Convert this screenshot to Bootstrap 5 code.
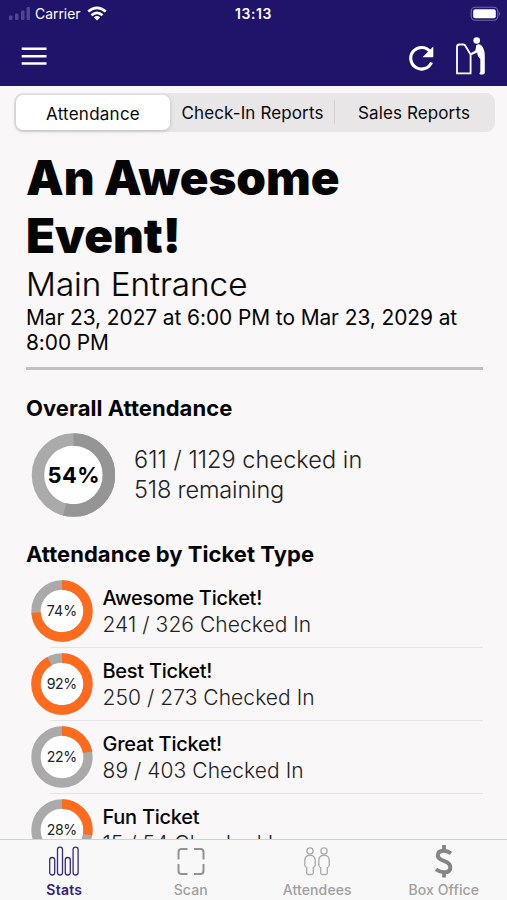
<!DOCTYPE html>
<html lang="en">
<head>
<meta charset="utf-8">
<meta name="viewport" content="width=device-width, initial-scale=1">
<title>Event Stats</title>
<link href="https://cdn.jsdelivr.net/npm/bootstrap@5.3.0/dist/css/bootstrap.min.css" rel="stylesheet">
<style>
body{font-family:Inter,"Liberation Sans",sans-serif;background:#f9f7f8;color:#050505}
svg{display:block;flex:none}
.app{height:900px;max-width:507px}
.top{background:#1f136a;color:#fff;height:86px;flex:none}
.status{height:28px;padding:0 5px 0 9px;font-size:13.9px;line-height:28px}
.status>*{flex:1 1 0}
.clock{font-weight:600;letter-spacing:.65px;margin-left:-4px}
.tools{height:58px;padding:0 20px 0 21px}
.door{margin-left:20px;margin-top:-2px}
.segment{height:39px;margin:7px 12px 0 14px;background:#e8e6e7;border-radius:9px;flex:none;font-size:17px;font-weight:500}
.segment button{border:0;background:none;padding:2px 0 0;color:#080808;white-space:nowrap;height:38px;line-height:35px;letter-spacing:.12px}
.segment .chosen{width:154px;height:35px;line-height:32px;background:#fff;border-radius:7px;box-shadow:0 1px 4px #0003;margin:2px 0 0 2px;letter-spacing:.25px}
.seg-mid{width:165px}
.segment .seg-end{flex:1;position:relative;padding-right:2px}
.seg-end::before{content:"";position:absolute;left:-1px;top:7px;height:24px;border-left:1px solid #d2d0d2}
.content{padding:17px 24px 0 26px;min-height:0;overflow:hidden}
.title{font-size:47.500px;line-height:57.5px;font-weight:900;margin:0;width:350px;letter-spacing:-.03px}
.place{font-size:33.2px;line-height:41px;font-weight:300;white-space:nowrap;-webkit-text-stroke:.2px #050505}
.dates{font-size:20.900px;line-height:25px;white-space:nowrap;letter-spacing:-.07px}
.rule{height:2.500px;background:#c2c0c2;margin-top:12px}
.heading{font-size:22px;line-height:28px;font-weight:700;margin:24px 0 0;white-space:nowrap;letter-spacing:.04px}
.overall{height:84px;padding-left:5px;gap:19px;margin-top:11px}
.by-type{margin-top:23px}
.count{font-size:23.500px;line-height:30.5px;font-weight:300;white-space:nowrap;color:#222;letter-spacing:.06px;padding-top:1px}
.remain{letter-spacing:-.15px}
.tickets{padding-left:5px;margin-top:8px}
.ticket{height:73.3px;gap:9.500px;position:relative}
.ticket svg{margin-top:4px}
.ticket-text{padding-top:9px}
.ticket::after{content:"";position:absolute;left:19px;right:0;bottom:1px;height:1.300px;background:#e5e3e5}
.ticket-name{font-size:20px;line-height:26px;font-weight:500;white-space:nowrap;letter-spacing:-.27px}
.ticket-count{font-size:21px;line-height:27px;font-weight:300;white-space:nowrap;color:#222;letter-spacing:.05px}
.tabs{height:61px;padding-left:1px;background:#f8f8f8;border-top:1px solid #d3d1d3;flex:none;font-size:14px;font-weight:500;color:#a0a0a0}
.tabs a{flex:1;text-decoration:none;color:inherit;padding-top:3px;line-height:18px;letter-spacing:.12px}
.tabs svg{margin-bottom:2px}
.tabs a.current{color:#30207c;font-weight:600;letter-spacing:.25px}
</style>
<script src="https://cdn.jsdelivr.net/npm/bootstrap@5.3.0/dist/js/bootstrap.bundle.min.js"></script>
</head>
<body>
<div class="app d-flex flex-column overflow-hidden">
<header class="top">
<div class="status d-flex align-items-center">
<div class="d-flex align-items-center">
<svg width="22" height="14" fill="#51468b"><rect y="8.5" width="3.5" height="4.5" rx="1"/><rect x="6" y="6.5" width="3.5" height="6.5" rx="1"/><rect x="12" y="3.5" width="3.5" height="9.5" rx="1"/><rect x="17.5" y="0" width="3.5" height="13" rx="1"/></svg>
<span class="ms-1">Carrier</span>
<svg width="22" height="16" viewBox="0 0 22 16" fill="none" stroke="#fff" stroke-width="2.7" style="margin-left:5px"><path d="M2.3 5.6Q11-2 19.7 5.6M5.5 9.200Q11 4.5 16.5 9.200"/><path d="M11 14.500 7.8 11.3Q11 8.6 14.2 11.3Z" fill="#fff" stroke="none"/></svg>
</div>
<div class="clock text-center">13:13</div>
<div class="d-flex justify-content-end"><svg width="32" height="16" viewBox="0 0 32 16"><rect x="1.200" y="1.200" width="26.6" height="13" rx="4" fill="none" stroke="#7169a4" stroke-width="1.1"/><rect x="3.2" y="3.200" width="22.6" height="9" rx="2" fill="#fff"/><path d="M29.2 5.5q2 2.3 0 4.6Z" fill="#7169a4"/></svg></div>
</div>
<div class="tools d-flex align-items-center">
<svg width="26" height="20" viewBox="0 0 26 20" stroke="#fff" stroke-width="2.5"><path d="M.7 1.7h24.8M.7 9.200h24.8M.7 16.500h24.8"/></svg>
<svg class="ms-auto" width="28" height="28" viewBox="0 0 28 28"><path d="M23.3 8.900A10.8 10.8 0 1 0 24.5 19.500" fill="none" stroke="#fff" stroke-width="3.1"/><path d="M26.3 3.5V14.300H15.5Z" fill="#fff"/></svg>
<svg class="door" width="32" height="40" viewBox="0 0 32 40"><path d="M2 37.4V11q0-2.5 2.5-2.5h3.8q1.4 0 2 1.2l5.3 8.8v18.9Z" fill="none" stroke="#fff" stroke-width="1.8" stroke-linejoin="round"/><circle cx="21.7" cy="4.500" r="3.3" fill="#fff"/><path d="M21.3 8.9Q25 7.3 27 9.900 30.2 14 29.8 22V36.500q0 2-2 2h-2.2q-1.3 0-1.1-1.5l.8-1V23Q22 20 22.3 16.600L16.2 19.200 15.6 17.300 20.4 14.500Z" fill="#fff"/></svg>
</div>
</header>
<div class="segment d-flex">
<button class="chosen">Attendance</button><button class="seg-mid">Check-In Reports</button><button class="seg-end">Sales Reports</button>
</div>
<main class="content flex-grow-1">
<h1 class="title">An Awesome Event!</h1>
<div class="place">Main Entrance</div>
<div class="dates">Mar 23, 2027 at 6:00 PM to Mar 23, 2029 at<br>8:00 PM</div>
<div class="rule"></div>
<h2 class="heading">Overall Attendance</h2>
<div class="overall d-flex align-items-center">
<svg width="84" height="84" viewBox="0 0 84 84"><circle cx="42.5" cy="42" r="35.5" fill="#fff" stroke="#aaa" stroke-width="12.5"/><circle cx="42.5" cy="42" r="35.5" fill="none" stroke="#959595" stroke-width="12.5" pathLength="100" stroke-dasharray="54 46" transform="rotate(-90 42.5 42)"/><text x="42.5" y="50" text-anchor="middle" font-size="22" font-weight="700" textLength="52">54%</text></svg>
<div class="count"><div>611 / 1129 checked in</div><div class="remain">518 remaining</div></div>
</div>
<h2 class="heading by-type">Attendance by Ticket Type</h2>
<div class="tickets">
<div class="ticket d-flex"><svg width="62" height="62" viewBox="0 0 62 62"><circle cx="31" cy="31" r="26" fill="#fff" stroke="#aaa" stroke-width="9.3"/><circle cx="31" cy="31" r="26" fill="none" stroke="#ff6b1c" stroke-width="9.3" pathLength="100" stroke-dasharray="74 26" transform="rotate(-90 31 31)"/><text x="31" y="36" text-anchor="middle" font-size="14.2" fill="#222" textLength="30.5">74%</text></svg><div class="ticket-text"><div class="ticket-name">Awesome Ticket!</div><div class="ticket-count">241 / 326 Checked In</div></div></div>
<div class="ticket d-flex"><svg width="62" height="62" viewBox="0 0 62 62"><circle cx="31" cy="31" r="26" fill="#fff" stroke="#aaa" stroke-width="9.3"/><circle cx="31" cy="31" r="26" fill="none" stroke="#ff6b1c" stroke-width="9.3" pathLength="100" stroke-dasharray="92 8" transform="rotate(-90 31 31)"/><text x="31" y="36" text-anchor="middle" font-size="14.2" fill="#222" textLength="30.5">92%</text></svg><div class="ticket-text"><div class="ticket-name">Best Ticket!</div><div class="ticket-count">250 / 273 Checked In</div></div></div>
<div class="ticket d-flex"><svg width="62" height="62" viewBox="0 0 62 62"><circle cx="31" cy="31" r="26" fill="#fff" stroke="#aaa" stroke-width="9.3"/><circle cx="31" cy="31" r="26" fill="none" stroke="#ff6b1c" stroke-width="9.3" pathLength="100" stroke-dasharray="22 78" transform="rotate(-90 31 31)"/><text x="31" y="36" text-anchor="middle" font-size="14.2" fill="#222" textLength="30.5">22%</text></svg><div class="ticket-text"><div class="ticket-name">Great Ticket!</div><div class="ticket-count">89 / 403 Checked In</div></div></div>
<div class="ticket d-flex"><svg width="62" height="62" viewBox="0 0 62 62"><circle cx="31" cy="31" r="26" fill="#fff" stroke="#aaa" stroke-width="9.3"/><circle cx="31" cy="31" r="26" fill="none" stroke="#ff6b1c" stroke-width="9.3" pathLength="100" stroke-dasharray="28 72" transform="rotate(-90 31 31)"/><text x="31" y="36" text-anchor="middle" font-size="14.2" fill="#222" textLength="30.5">28%</text></svg><div class="ticket-text"><div class="ticket-name">Fun Ticket</div><div class="ticket-count">15 / 54 Checked In</div></div></div>
</div>
</main>
<nav class="tabs d-flex">
<a class="current d-flex flex-column align-items-center" href="#"><svg width="32" height="36" viewBox="0 0 32 36" fill="none" stroke="#382a82" stroke-width="1.3"><rect x="1.7" y="14.500" width="5" height="17.5" rx="2.5"/><rect x="9.5" y="4.100" width="5" height="27.9" rx="2.5"/><rect x="17.3" y="14.500" width="5" height="17.5" rx="2.5"/><rect x="25.1" y="4.100" width="5" height="27.9" rx="2.5"/></svg>Stats</a>
<a class="d-flex flex-column align-items-center" href="#"><svg width="32" height="36" viewBox="0 0 32 36" fill="none" stroke="#929292" stroke-width="2"><path d="M3.5 16.500V9q0-3 3-3h6M19 6h6.500q3 0 3 3v7.500M28.500 21v7q0 3-3 3H19M12.500 31h-6q-3 0-3-3v-7"/></svg>Scan</a>
<a class="d-flex flex-column align-items-center" href="#"><svg width="32" height="36" viewBox="0 0 32 36" fill="none" stroke="#aaa" stroke-width="1.3"><g id="person"><circle cx="9" cy="8" r="3.100"/><path d="M9 12.300Q3.800 12.300 3.800 17.500v5q.2 1.500 1.900 2V30q0 1.500 1.500 1.500h3.600q1.500 0 1.500-1.500v-5.500q1.700-.5 1.900-2v-5Q14.200 12.300 9 12.300Z"/></g><use href="#person" x="14"/></svg>Attendees</a>
<a class="d-flex flex-column align-items-center" href="#"><svg width="32" height="36" viewBox="0 0 32 36" fill="none" stroke="#858585" stroke-width="4"><path d="M23 10.300Q19.500 7.700 15.500 7.700 9.800 7.700 9.800 12.200 9.800 15.700 16 17.900 22.300 20.200 22.300 24.400 22.300 29.200 16 29.200 11.800 29.200 8 26.200"/><path d="M16 2v6M16 29V34.500" stroke-width="3.800"/></svg>Box Office</a>
</nav>
</div>
</body>
</html>
